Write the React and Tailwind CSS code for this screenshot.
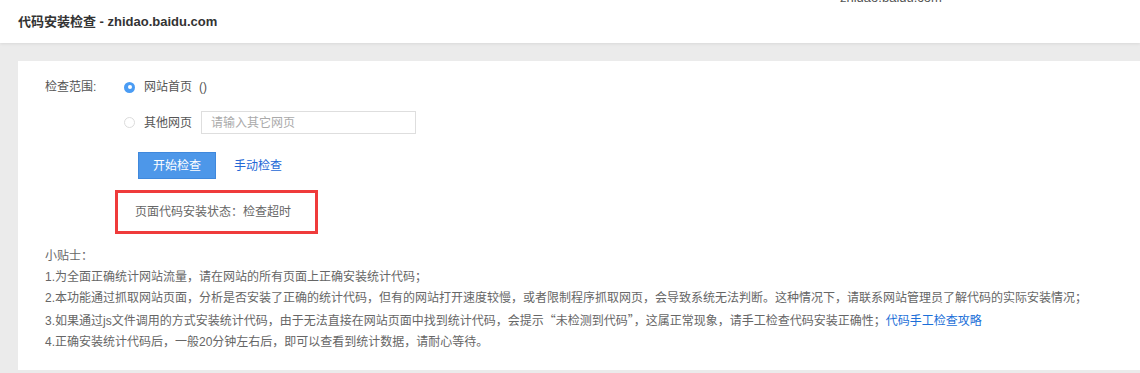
import { useState } from "react";

const tips = [
  "1.为全面正确统计网站流量，请在网站的所有页面上正确安装统计代码；",
  "2.本功能通过抓取网站页面，分析是否安装了正确的统计代码，但有的网站打开速度较慢，或者限制程序抓取网页，会导致系统无法判断。这种情况下，请联系网站管理员了解代码的实际安装情况；",
];

const Radio = ({ checked, onClick }) => (
  <button
    onClick={onClick}
    className={`w-[11px] h-[11px] rounded-full flex items-center justify-center shrink-0 ${
      checked ? "bg-[#4a9cf4]" : "border border-[#dcdcdc] bg-white"
    }`}
  >
    {checked && <span className="w-[4px] h-[4px] rounded-full bg-white" />}
  </button>
);

const App = () => {
  const [scope, setScope] = useState("home");

  return (
    <div className="w-[1140px] h-[373px] overflow-hidden bg-[#ebebeb] font-['Liberation_Sans','Noto_Sans_CJK_SC',sans-serif]">
      {/* Header */}
      <div className="relative h-[43px] bg-white flex items-center px-[18px] shadow-[0_1px_3px_rgba(0,0,0,0.08)]">
        <h1 className="text-[13px] leading-none font-bold text-[#333]">
          代码安装检查 - zhidao.baidu.com
        </h1>
        <span className="absolute left-[840px] top-[-10px] text-[13px] leading-[16px] text-[#555]">
          zhidao.baidu.com
        </span>
      </div>

      {/* Card */}
      <div className="mt-[18px] ml-[18px] bg-white pl-[27px] pt-[13px] pb-[17px] text-[12px] text-[#666]">
        <div className="flex">
          <div className="w-[79px] h-[26px] flex items-center text-[#555]">检查范围:</div>
          <div className="flex flex-col">
            <div className="h-[26px] flex items-center">
              <Radio checked={scope === "home"} onClick={() => setScope("home")} />
              <span className="ml-[9px] text-[#555]">网站首页</span>
              <span className="ml-[7px] text-[#555]">()</span>
            </div>
            <div className="mt-[11px] h-[23px] flex items-center">
              <Radio checked={scope === "other"} onClick={() => setScope("other")} />
              <span className="ml-[9px] text-[#555]">其他网页</span>
              <input
                placeholder="请输入其它网页"
                className="ml-[9px] w-[215px] h-[23px] border border-[#dedede] px-[9px] text-[12px] outline-none placeholder:text-[#aaa]"
              />
            </div>
          </div>
        </div>

        <div className="mt-[18px] ml-[93px] flex items-center">
          <button className="w-[78px] h-[27px] bg-[#4d97e9] border border-[#3f88dc] text-white text-[12px]">
            开始检查
          </button>
          <a href="#" className="ml-[18px] text-[#2468d6]">
            手动检查
          </a>
        </div>

        <div className="mt-[11px] ml-[70px] w-[203px] h-[44px] border-[3px] border-[#ef3b3b] flex items-center pl-[17px]">
          页面代码安装状态：检查超时
        </div>

        <div className="mt-[12px] leading-[21px]">
          <p>小贴士：</p>
          {tips.map((t) => (
            <p key={t}>{t}</p>
          ))}
          <p>
            3.如果通过js文件调用的方式安装统计代码，由于无法直接在网站页面中找到统计代码，会提示
            <span className="font-['Noto_Sans_CJK_SC']">“未检测到代码”</span>
            ，这属正常现象，请手工检查代码安装正确性；
            <a href="#" className="text-[#1b6fd8]">
              代码手工检查攻略
            </a>
          </p>
          <p>4.正确安装统计代码后，一般20分钟左右后，即可以查看到统计数据，请耐心等待。</p>
        </div>
      </div>
    </div>
  );
};

export default App;
